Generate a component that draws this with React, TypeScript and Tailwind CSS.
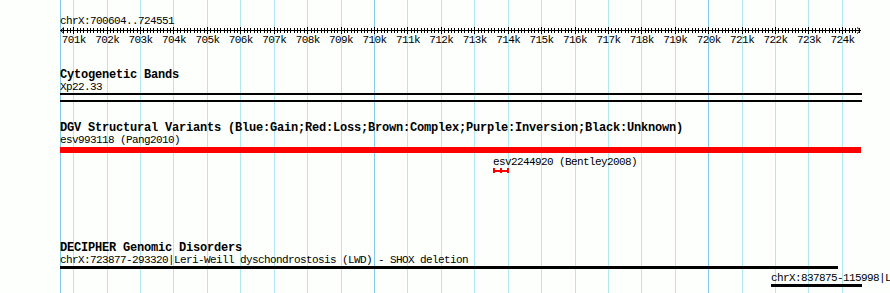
const START = 700604;
const X0 = 60;
const PX_PER_BP = 0.03342;

const xOf = (bp: number) => X0 + (bp - START) * PX_PER_BP;

const kbMarks = Array.from({ length: 24 }, (_, i) => 701 + i);
const minorTicks = Array.from({ length: 7245 - 7007 + 1 }, (_, i) => 7007 + i);

const txt = "h-[12px] text-[11px] leading-[12px] tracking-[-0.6px] whitespace-nowrap";
const title = "h-[12px] text-[12px] leading-[12px] font-bold tracking-[-0.2px] whitespace-nowrap";

const GridLines = () => (
  <svg className="absolute inset-0 pointer-events-none" width={890} height={293}>
    <line x1={60.5} y1={0} x2={60.5} y2={293} stroke="#86c9ea" strokeWidth={1} />
    {kbMarks.map((k) => {
      const x = Math.round(xOf(k * 1000)) + 0.5;
      const major = k % 10 === 0;
      return (
        <line
          key={k}
          x1={x}
          y1={0}
          x2={x}
          y2={293}
          stroke={major ? "#86c9ea" : "#b2e9ef"}
          strokeWidth={1}
        />
      );
    })}
  </svg>
);

const Ruler = () => (
  <svg width={802} height={7} className="block">
    <line x1={0} y1={3.5} x2={801} y2={3.5} stroke="#000" strokeWidth={1} />
    {/* arrow heads */}
    <polyline points="4,0.5 0.5,3.5 4,6.5" fill="none" stroke="#000" strokeWidth={1} />
    <polyline points="797,0.5 800.5,3.5 797,6.5" fill="none" stroke="#000" strokeWidth={1} />
    {minorTicks.map((n) => {
      const x = Math.round(xOf(n * 100) - X0) + 0.5;
      const major = n % 10 === 0;
      return (
        <line
          key={n}
          x1={x}
          y1={major ? 0 : 1}
          x2={x}
          y2={major ? 7 : 6}
          stroke="#000"
          strokeWidth={1}
        />
      );
    })}
  </svg>
);

const App = () => {
  return (
    <div className="relative w-[890px] h-[293px] overflow-hidden bg-[#fcfffc] font-['Liberation_Mono',monospace] text-black">
      <GridLines />

      <div className="relative flex flex-col pl-[60px] w-[862px]">
        {/* Ruler */}
        <div className={`mt-[15px] ${txt}`}>chrX:700604..724551</div>
        <Ruler />
        <div className="relative h-[12px]">
          {kbMarks.map((k) => (
            <span
              key={k}
              className={`absolute top-0 -translate-x-1/2 ${txt}`}
              style={{ left: xOf(k * 1000) - X0 + 0.5 }}
            >
              {k}k
            </span>
          ))}
        </div>

        {/* Cytogenetic bands */}
        <div className={`mt-[23px] ${title}`}>Cytogenetic Bands</div>
        <div className={txt}>Xp22.33</div>
        <div className="h-[9px] w-[802px] border-y-2 border-black" />

        {/* DGV */}
        <div className={`mt-[20px] ${title}`}>
          DGV Structural Variants (Blue:Gain;Red:Loss;Brown:Complex;Purple:Inversion;Black:Unknown)
        </div>
        <div className={txt}>esv993118 (Pang2010)</div>
        <div className="mt-[1px] h-[6px] w-[801px] bg-[#ff0000]" />
        <div className="ml-[433px] flex flex-col">
          <div className={`mt-[3px] ${txt}`}>esv2244920 (Bentley2008)</div>
          <svg width={17} height={5} className="block" shapeRendering="crispEdges">
            <rect x={0} y={0} width={2} height={5} fill="#ff0000" />
            <rect x={7} y={0} width={2} height={5} fill="#ff0000" />
            <rect x={14} y={0} width={2} height={5} fill="#ff0000" />
            <rect x={0} y={2} width={16} height={2} fill="#ff0000" />
          </svg>
        </div>

        {/* DECIPHER */}
        <div className={`mt-[69px] ${title}`}>DECIPHER Genomic Disorders</div>
        <div className={txt}>chrX:723877-293320|Leri-Weill dyschondrostosis (LWD) - SHOX deletion</div>
        <div className="h-[3px] w-[778px] bg-black" />
        <div className="ml-[711px] flex flex-col">
          <div className={`mt-[3px] ${txt}`}>chrX:837875-115998|Leri-Weill</div>
          <div className="h-[3px] w-[91px] bg-black" />
        </div>
      </div>
    </div>
  );
};

export default App;
